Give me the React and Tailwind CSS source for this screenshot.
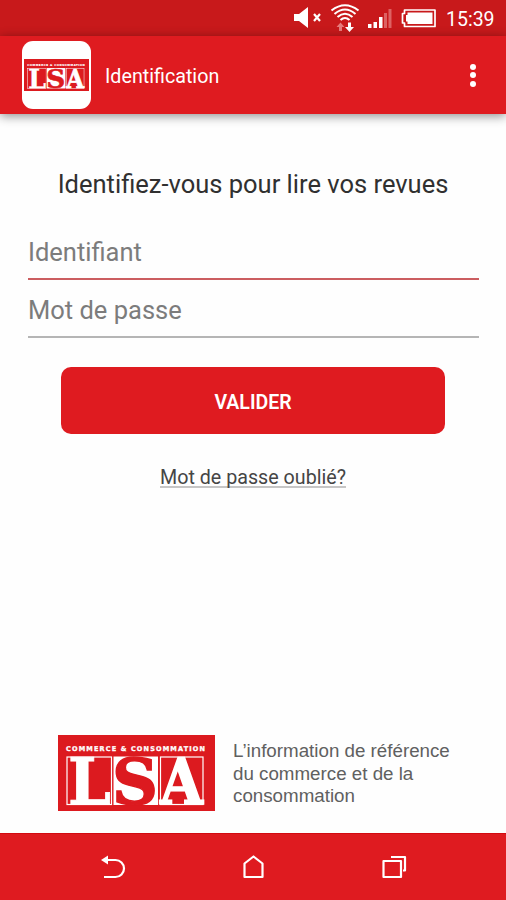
const serif = '"DejaVu Serif", "Liberation Serif", serif';

function LsaLogo({ className }) {
  return (
    <svg className={className} viewBox="0 0 157 76" preserveAspectRatio="none" overflow="visible" aria-label="LSA">
      <rect width="157" height="76" fill="#dc1a1f" />
      <text x="8" y="16" fill="#fff" stroke="#fff" strokeWidth="0.3" fontFamily='"DejaVu Sans", sans-serif' fontWeight="bold" fontSize="6.5" textLength="139" lengthAdjust="spacing">
        COMMERCE &amp; CONSOMMATION
      </text>
      <rect x="9" y="22" width="44.5" height="47.5" fill="none" stroke="#fff" strokeWidth="1.2" />
      <rect x="55.5" y="21.5" width="44.500" height="48.5" fill="#fff" />
      <rect x="102.5" y="22" width="42.500" height="47.5" fill="none" stroke="#fff" strokeWidth="1.2" />
      <g fontFamily={serif} fontWeight="bold" fontSize="63.500">
        <text x="10" y="69" fill="#fff" stroke="#fff" strokeWidth="0.8" textLength="43" lengthAdjust="spacingAndGlyphs">L</text>
        <text x="54" y="68.8" fill="#dc1a1f" stroke="#dc1a1f" strokeWidth="1.4" textLength="46" lengthAdjust="spacingAndGlyphs">S</text>
        <text x="102" y="69" fill="#fff" stroke="#fff" strokeWidth="1.6" textLength="43" lengthAdjust="spacingAndGlyphs">A</text>
      </g>
    </svg>
  );
}

function StatusBar() {
  return (
    <div className="flex h-9 items-center justify-end bg-[#c8191b] pr-[11px] text-white">
      <svg className="h-9 w-[152px]" viewBox="288 0 152 36" fill="none">
        <path d="M294 14h5l9-7v21l-9-7h-5z" fill="#fff" />
        <path d="M314 14l6 7m0-7l-6 7" stroke="#fff" strokeWidth="2.2" />
        <g stroke="#fff" strokeWidth="2.1">
          <path d="M331.5 10.5Q345 0 358.500 10.500" />
          <path d="M334.500 14Q345 5 355.500 14" />
          <path d="M337.500 17Q345 10.500 352.500 17" />
          <path d="M340.500 20Q345 16 349.500 20" />
        </g>
        <path d="M340.500 22.500l4 4.500h-2.500v4h-3v-4h-2.500z" fill="#e77b7c" />
        <path d="M349.500 32l-4.500-5h3v-4.500h3v4.500h3z" fill="#fff" />
        <path d="M368 24h3.500v4H368zM373.500 22h3.500v6h-3.500zM379 17h3.500v11H379z" fill="#fff" />
        <path d="M384 13h3v15h-3zM388.500 9h3v19h-3z" fill="#dd6263" />
        <path d="M404.500 10h30.500v16.500H404.500v-3.500h-2v-9.500h2z" stroke="#fff" strokeWidth="1.7" strokeLinejoin="round" />
        <path d="M407.500 12.500h25V24h-25v-2.500H406v-6.500h1.500z" fill="#fff" />
      </svg>
      <span className="ml-1.5 w-[49px] pt-1 text-[19.500px] leading-8 whitespace-nowrap">15:39</span>
    </div>
  );
}

function AppBar() {
  return (
    <header className="relative flex h-[78px] items-center bg-[#df1b20] pr-[30px] pl-[22px] text-white shadow-[0_2px_10px_rgba(0,0,0,0.45)]">
      <div className="flex h-[68px] w-[69px] items-center justify-center rounded-[11px] bg-white">
        <LsaLogo className="h-8 w-[65px]" />
      </div>
      <h1 className="ml-[14px] pt-1 text-[19.700px] leading-7">Identification</h1>
      <button className="ml-auto flex flex-col gap-[2.5px]" aria-label="Menu">
        <span className="size-1.5 rounded-full bg-white" />
        <span className="size-1.5 rounded-full bg-white" />
        <span className="size-1.5 rounded-full bg-white" />
      </button>
    </header>
  );
}

function NavBar() {
  return (
    <nav className="h-[67px] border-t border-[#d20b10] bg-[#df1b20]">
      <svg className="h-[66px] w-full" viewBox="0 834 506 66" fill="none" stroke="#fff" strokeWidth="2.2">
        <path d="M107 860h8.500a8.500 8.500 0 0 1 0 17H104" />
        <path d="M101 860l7-4.500v9z" fill="#fff" stroke="none" />
        <path d="M244.500 863.500l9-7 9 7V877h-18z" strokeLinejoin="round" />
        <path d="M383.500 861H401v16h-17.500zM391 857h14v13.500h-2" strokeLinejoin="round" />
      </svg>
    </nav>
  );
}

export default function App() {
  return (
    <div className="flex h-[900px] w-[506px] flex-col overflow-hidden bg-[#fefefe] font-[Roboto,sans-serif]">
      <StatusBar />
      <AppBar />
      <main className="flex flex-1 flex-col px-7">
        <h2 className="mt-[54px] text-center text-[25.500px] leading-8 whitespace-nowrap text-[#303030]">
          Identifiez-vous pour lire vos revues
        </h2>
        <div className="mt-[35px] h-[45px] w-[451px] border-b-2 border-[#cb5d60] text-[25.500px] leading-[34px] text-[#7c7c7c]">Identifiant</div>
        <div className="mt-[13px] h-[45px] w-[451px] border-b-2 border-[#b5b5b5] text-[25.500px] leading-[34px] text-[#7c7c7c]">Mot de passe</div>
        <button className="mx-auto mt-[29px] h-[67px] w-[384px] rounded-[10px] bg-[#df1b20] pt-1 text-[19.500px] font-semibold text-white">
          VALIDER
        </button>
        <a className="mx-auto mt-[32px] h-[22px] border-b-2 border-[#c6c6c6] text-[19.700px] leading-6 text-[#454545]">Mot de passe oublié?</a>
        <div className="mt-auto mb-[22px] ml-[30px] flex items-center">
          <LsaLogo className="h-[76px] w-[157px]" />
          <p className="ml-[18px] pt-0.5 font-['Liberation_Sans',Arial,sans-serif] text-[18.750px] leading-[22.500px] whitespace-nowrap text-[#606060]">
            L’information de référence
            <br />
            du commerce et de la
            <br />
            consommation
          </p>
        </div>
      </main>
      <NavBar />
    </div>
  );
}
